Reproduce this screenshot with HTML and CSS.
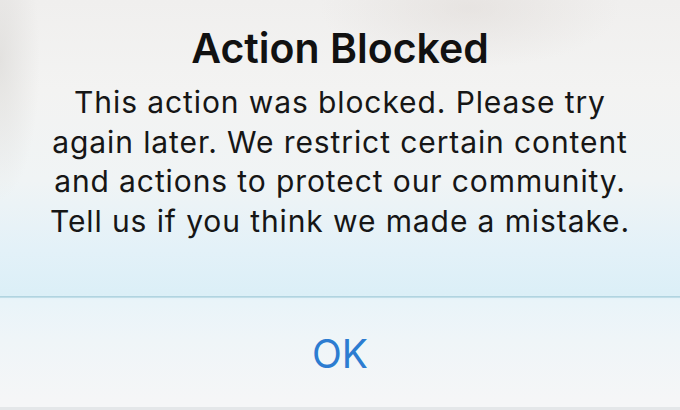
FILE: index.html
```html
<!DOCTYPE html>
<html lang="en">
<head>
<meta charset="utf-8">
<title>Action Blocked</title>
<link rel="stylesheet" href="styles.css">
</head>
<body>
<div class="alert">
  <div class="message">
    <h1 class="title">Action Blocked</h1>
    <p class="body-text">This action was blocked. Please try<br>again later. We restrict certain content<br>and actions to protect our community.<br>Tell us if you think we made a mistake.</p>
  </div>
  <div class="separator"></div>
  <div class="actions">
    <button class="btn-ok">OK</button>
  </div>
</div>
</body>
</html>
```
FILE: styles.css
```css
html, body {
  margin: 0;
  padding: 0;
}
body {
  width: 680px;
  height: 410px;
  overflow: hidden;
  font-family: Inter, "Liberation Sans", sans-serif;
}
.alert {
  width: 680px;
  height: 410px;
  display: flex;
  flex-direction: column;
  background:
    radial-gradient(ellipse 150px 60px at 470px 8px, rgba(220,214,210,0.45), rgba(220,214,210,0) 100%),
    radial-gradient(ellipse 40px 140px at 0px 60px, rgba(212,210,207,0.5), rgba(212,210,207,0) 100%),
    linear-gradient(180deg, #f0efee 0px, #f3f3f2 90px, #f0f4f5 180px, #e3f1f8 250px, #dbeff7 295px, #e9f4f9 300px, #eff5f8 340px, #f5f6f7 400px);
  border-bottom: 3px solid #e4e7e9;
  box-sizing: border-box;
}
.message {
  height: 296px;
  box-sizing: border-box;
  padding-top: 24px;
  text-align: center;
}
.title {
  margin: 0;
  font-size: 41px;
  line-height: 48px;
  font-weight: 600;
  color: #111;
}
.body-text {
  margin: 11px 0 0;
  font-size: 30px;
  line-height: 39.7px;
  letter-spacing: 0.9px;
  font-weight: 400;
  color: #161616;
}
.separator {
  height: 2px;
  background: linear-gradient(180deg, #a9cfdd, #c9e3ec);
}
.actions {
  flex: 1;
  display: flex;
  align-items: center;
  justify-content: center;
}
.btn-ok {
  border: 0;
  background: none;
  padding: 0;
  margin-top: 2px;
  font-family: inherit;
  font-size: 39px;
  line-height: 46px;
  color: #2c7cd1;
}
```
